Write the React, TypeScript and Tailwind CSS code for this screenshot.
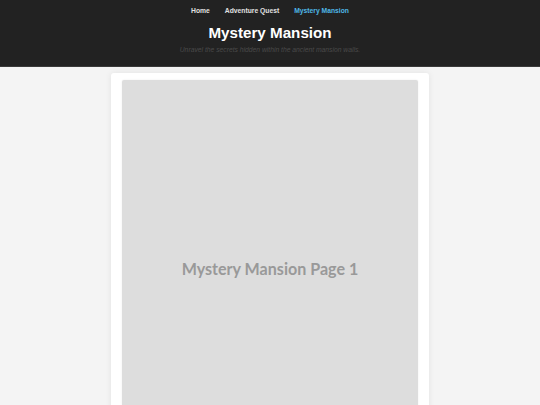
export default function App() {
  return (
    <div className="min-h-[405px] bg-[#f4f4f4]" style={{ fontFamily: '"Liberation Sans", Arial, sans-serif' }}>
      <header className="h-[67px] bg-[#222222] border-b border-[#3a3a3a] flex flex-col items-center">
        <nav className="flex gap-[15px] pt-[7px] text-[6.75px] font-bold leading-[8px]">
          <span className="text-[#e0e0e0]">Home</span>
          <span className="text-[#e0e0e0]">Adventure Quest</span>
          <span className="text-[#4fb8e8]">Mystery Mansion</span>
        </nav>
        <h1 className="mt-[9px] text-[15.2px] font-bold text-white leading-[18px]">Mystery Mansion</h1>
        <p className="mt-[4px] text-[6.75px] italic text-[#4a4a4a] leading-[8px]">
          Unravel the secrets hidden within the ancient mansion walls.
        </p>
      </header>
      <main className="flex justify-center pt-[6px]">
        <div className="w-[318px] bg-white rounded-[3px] shadow-[0_0_6px_rgba(0,0,0,0.08)] px-[11px] pt-[7px] pb-[10px]">
          <div className="h-[378px] bg-[#dddddd] rounded-[2px] shadow-[0_0_2px_rgba(0,0,0,0.08)] flex items-center justify-center">
            <span className="text-[16.1px] font-bold text-[#999999]" style={{ fontFamily: 'Lato, sans-serif' }}>
              Mystery Mansion Page 1
            </span>
          </div>
        </div>
      </main>
    </div>
  );
}
